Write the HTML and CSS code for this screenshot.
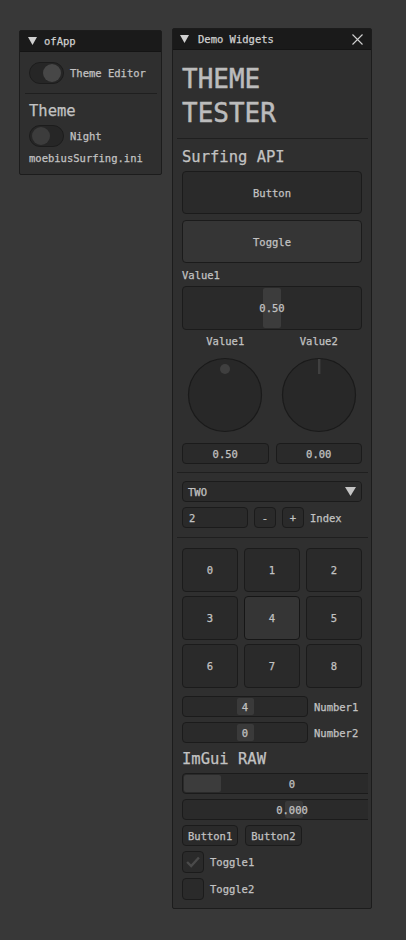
FILE: index.html
```html
<!DOCTYPE html>
<html>
<head>
<meta charset="utf-8">
<link rel="stylesheet" href="styles.css">
</head>
<body>
<div class="desk">
  <div class="win win-app">
    <div class="titlebar">
      <svg class="tri" width="9" height="8" viewBox="0 0 9 8"><polygon points="0,0 9,0 4.5,8" fill="#d0d0d0"/></svg>
      <span class="title">ofApp</span>
    </div>
    <div class="body app-body">
      <div class="row r-toggle1">
        <span class="switch on"><span class="knob"></span></span>
        <span class="lbl">Theme Editor</span>
      </div>
      <div class="sep sep-app"></div>
      <div class="h2 app-h2">Theme</div>
      <div class="row r-toggle2">
        <span class="switch"><span class="knob"></span></span>
        <span class="lbl">Night</span>
      </div>
      <div class="txt app-ini">moebiusSurfing.ini</div>
    </div>
  </div>

  <div class="win win-demo">
    <div class="titlebar">
      <svg class="tri" width="9" height="8" viewBox="0 0 9 8"><polygon points="0,0 9,0 4.5,8" fill="#d0d0d0"/></svg>
      <span class="title">Demo Widgets</span>
      <svg class="close" width="11" height="11" viewBox="0 0 11 11"><path d="M0.5 0.5 L10.5 10.5 M10.5 0.5 L0.5 10.5" stroke="#d0d0d0" stroke-width="1.1"/></svg>
    </div>
    <div class="body demo-body">
      <div class="h1">THEME<br>TESTER</div>
      <div class="sep sep-demo s1"></div>
      <div class="h2 m-surf">Surfing API</div>
      <div class="bigbtn m-btn">Button</div>
      <div class="bigbtn toggled m-tog">Toggle</div>
      <div class="txt m-val">Value1</div>
      <div class="hslider m-hs">
        <span class="hgrab"></span>
        <span class="hval">0.50</span>
      </div>
      <div class="knobs">
        <div class="kcol">
          <div class="txt kl">Value1</div>
          <svg class="knob-svg" width="76" height="76" viewBox="0 0 76 76">
            <circle cx="38" cy="38" r="36.5" fill="#282828" stroke="#1a1a1a" stroke-width="1.2"/>
            <circle cx="38" cy="12" r="5" fill="#3f3f3f"/>
          </svg>
          <div class="vbox">0.50</div>
        </div>
        <div class="kcol">
          <div class="txt kl">Value2</div>
          <svg class="knob-svg" width="76" height="76" viewBox="0 0 76 76">
            <circle cx="38" cy="38" r="36.5" fill="#282828" stroke="#1a1a1a" stroke-width="1.2"/>
            <rect x="37" y="2" width="2.4" height="15" fill="#404040"/>
          </svg>
          <div class="vbox">0.00</div>
        </div>
      </div>
      <div class="sep sep-demo s2"></div>
      <div class="combo">
        <span class="ctext">TWO</span>
        <span class="carrow"><svg width="11" height="9" viewBox="0 0 11 9"><polygon points="0,0 11,0 5.5,9" fill="#c4c4c4"/></svg></span>
      </div>
      <div class="idxrow">
        <span class="ibox">2</span>
        <span class="sbtn">-</span>
        <span class="sbtn">+</span>
        <span class="lbl">Index</span>
      </div>
      <div class="sep sep-demo s3"></div>
      <div class="grid">
        <div class="cell">0</div>
        <div class="cell">1</div>
        <div class="cell">2</div>
        <div class="cell">3</div>
        <div class="cell sel">4</div>
        <div class="cell">5</div>
        <div class="cell">6</div>
        <div class="cell">7</div>
        <div class="cell">8</div>
      </div>
      <div class="numrow n1">
        <span class="nslider"><span class="ngrab">4</span></span>
        <span class="lbl">Number1</span>
      </div>
      <div class="numrow n2">
        <span class="nslider"><span class="ngrab">0</span></span>
        <span class="lbl">Number2</span>
      </div>
      <div class="h2 m-raw">ImGui RAW</div>
      <div class="clip r1">
        <div class="rslider"><span class="rgrab-left"></span><span class="rval">0</span></div>
      </div>
      <div class="clip r2">
        <div class="rslider"><span class="rgrab-mid"></span><span class="rval">0.000</span></div>
      </div>
      <div class="btnrow">
        <span class="sbtn2">Button1</span>
        <span class="sbtn2">Button2</span>
      </div>
      <div class="chkrow c1">
        <span class="chk"><svg width="22" height="22" viewBox="0 0 22 22"><polyline points="4.5,11 9,15.5 17.5,6" fill="none" stroke="#4a4a4a" stroke-width="2.6"/></svg></span>
        <span class="lbl">Toggle1</span>
      </div>
      <div class="chkrow c2">
        <span class="chk"></span>
        <span class="lbl">Toggle2</span>
      </div>
    </div>
  </div>
</div>
</body>
</html>
```

FILE: styles.css
```css
* { box-sizing: border-box; }
html, body {
  margin: 0;
  padding: 0;
  background: #383838;
  width: 406px;
  height: 940px;
  overflow: hidden;
  font-family: "DejaVu Sans Mono", "Liberation Mono", monospace;
  color: #c2c2c2;
  -webkit-text-stroke: 0.25px #c2c2c2;
}
.desk { position: relative; width: 406px; height: 940px; }

.win {
  position: absolute;
  background: #2f2f2f;
  border: 1px solid #1c1c1c;
  border-radius: 2px;
}
.win-app { left: 19px; top: 30px; width: 143px; height: 145px; }
.win-demo { left: 172px; top: 28px; width: 200px; height: 881px; }

.titlebar {
  height: 21px;
  background: #1a1a1a;
  border-bottom: 1px solid #141414;
  display: flex;
  align-items: center;
  padding-left: 8px;
  font-size: 10.5px;
  color: #d0d0d0;
  -webkit-text-stroke: 0.25px #d0d0d0;
}
.titlebar .tri { margin-right: 7px; }
.win-demo .titlebar { padding-left: 7px; }
.win-demo .titlebar .tri { margin-right: 9px; }
.titlebar .close { margin-left: auto; margin-right: 8px; }

.body { display: flex; flex-direction: column; }
.app-body { padding: 10px 9px 0 9px; }
.demo-body { padding: 0 9px 0 9px; }

.txt, .lbl { font-size: 10.5px; line-height: 12px; white-space: nowrap; }

.row { display: flex; align-items: center; height: 22px; }
.row .lbl { margin-left: 6px; }

.switch {
  position: relative;
  width: 35px;
  height: 22px;
  border-radius: 11px;
  background: #262626;
  border: 1px solid #1c1c1c;
  flex: none;
}
.switch .knob {
  position: absolute;
  top: 1px;
  left: 2px;
  width: 18px;
  height: 18px;
  border-radius: 50%;
  background: #3c3c3c;
}
.switch.on .knob { left: auto; right: 2px; background: #474747; }

.sep { height: 1px; background: #1f1f1f; }
.sep-app { margin: 9px 0 0 -4px; width: 132px; }
.h2 { font-size: 15.5px; line-height: 18px; white-space: nowrap; }
.app-h2 { margin-top: 8px; }
.r-toggle2 { margin-top: 5px; }
.app-ini { margin-top: 5px; }

.h1 {
  font-size: 26px;
  line-height: 34px;
  margin-top: 12px;
  color: #bcbcbc;
  -webkit-text-stroke: 0.5px #bcbcbc;
}
.sep-demo { margin-left: -5px; width: 191px; }
.s1 { margin-top: 8px; }
.m-surf { margin-top: 9px; }

.bigbtn {
  height: 43px;
  background: #2a2a2a;
  border: 1px solid #1b1b1b;
  border-radius: 4px;
  display: flex;
  align-items: center;
  justify-content: center;
  font-size: 10.5px;
}
.bigbtn.toggled { background: #353535; }
.m-btn { margin-top: 5px; }
.m-tog { margin-top: 6px; }
.m-val { margin-top: 6px; }

.hslider {
  position: relative;
  margin-top: 5px;
  height: 44px;
  background: #2a2a2a;
  border: 1px solid #1b1b1b;
  border-radius: 4px;
  display: flex;
  align-items: center;
  justify-content: center;
  font-size: 10.5px;
}
.hgrab {
  position: absolute;
  left: 80px;
  top: 1px;
  width: 18px;
  bottom: 1px;
  background: #3c3c3c;
  border-radius: 2px;
}
.hval { position: relative; }

.knobs { display: flex; gap: 7px; margin-top: 5px; }
.kcol { flex: 1; display: flex; flex-direction: column; align-items: center; }
.kl { text-align: center; }
.knob-svg { margin-top: 10px; display: block; }
.vbox {
  margin-top: 10px;
  width: 100%;
  height: 21px;
  background: #2a2a2a;
  border: 1px solid #1b1b1b;
  border-radius: 4px;
  display: flex;
  align-items: center;
  justify-content: center;
  font-size: 10.5px;
}
.s2 { margin-top: 8px; }

.combo {
  margin-top: 8px;
  height: 21px;
  background: #2a2a2a;
  border: 1px solid #1b1b1b;
  border-radius: 4px;
  display: flex;
  align-items: center;
  font-size: 10.5px;
  overflow: hidden;
}
.ctext { padding-left: 5px; flex: 1; }
.carrow {
  width: 21px;
  height: 100%;
  background: #2c2c2c;
  display: flex;
  align-items: center;
  justify-content: center;
}

.idxrow { margin-top: 5px; display: flex; align-items: center; height: 21px; }
.ibox {
  width: 66px;
  height: 21px;
  background: #2a2a2a;
  border: 1px solid #1b1b1b;
  border-radius: 4px;
  font-size: 10.5px;
  display: flex;
  align-items: center;
  padding-left: 6px;
}
.sbtn {
  width: 22px;
  height: 21px;
  margin-left: 6px;
  background: #2a2a2a;
  border: 1px solid #1b1b1b;
  border-radius: 4px;
  font-size: 10.5px;
  display: flex;
  align-items: center;
  justify-content: center;
}
.idxrow .lbl { margin-left: 6px; }
.s3 { margin-top: 9px; }

.grid {
  margin-top: 10px;
  display: grid;
  grid-template-columns: 56px 56px 56px;
  column-gap: 6px;
  row-gap: 4px;
}
.cell {
  height: 44px;
  background: #2a2a2a;
  border: 1px solid #1b1b1b;
  border-radius: 4px;
  display: flex;
  align-items: center;
  justify-content: center;
  font-size: 10.5px;
}
.cell.sel { background: #353535; border-color: #161616; }

.numrow { display: flex; align-items: center; height: 21px; }
.n1 { margin-top: 8px; }
.n2 { margin-top: 5px; }
.nslider {
  width: 126px;
  height: 21px;
  background: #2a2a2a;
  border: 1px solid #1b1b1b;
  border-radius: 4px;
  display: flex;
  align-items: center;
  justify-content: center;
}
.ngrab {
  width: 17px;
  height: 17px;
  background: #3a3a3a;
  border-radius: 2px;
  font-size: 10.5px;
  display: flex;
  align-items: center;
  justify-content: center;
}
.numrow .lbl { margin-left: 6px; }

.m-raw { margin-top: 7px; }
.clip { width: 186px; overflow: hidden; height: 21px; }
.r1 { margin-top: 5px; }
.r2 { margin-top: 5px; }
.rslider {
  position: relative;
  width: 220px;
  height: 21px;
  background: #2a2a2a;
  border: 1px solid #1b1b1b;
  border-radius: 4px;
  display: flex;
  align-items: center;
  justify-content: center;
  font-size: 10.5px;
}
.rval { position: relative; }
.rgrab-left {
  position: absolute;
  left: 1px;
  top: 1px;
  bottom: 1px;
  width: 37px;
  background: #3c3c3c;
  border-radius: 2px;
}
.rgrab-mid {
  position: absolute;
  left: 102px;
  top: 1px;
  bottom: 1px;
  width: 18px;
  background: #3a3a3a;
  border-radius: 2px;
}

.btnrow { margin-top: 5px; display: flex; gap: 7px; }
.sbtn2 {
  height: 21px;
  padding: 0 5px;
  background: #2a2a2a;
  border: 1px solid #1b1b1b;
  border-radius: 4px;
  font-size: 10.5px;
  display: flex;
  align-items: center;
}

.chkrow { display: flex; align-items: center; margin-top: 5px; }
.chk {
  width: 22px;
  height: 22px;
  background: #2a2a2a;
  border: 1px solid #1b1b1b;
  border-radius: 4px;
  display: flex;
  align-items: center;
  justify-content: center;
  -webkit-text-stroke: 0;
}
.chk svg { display: block; }
.chkrow .lbl { margin-left: 6px; }
```
